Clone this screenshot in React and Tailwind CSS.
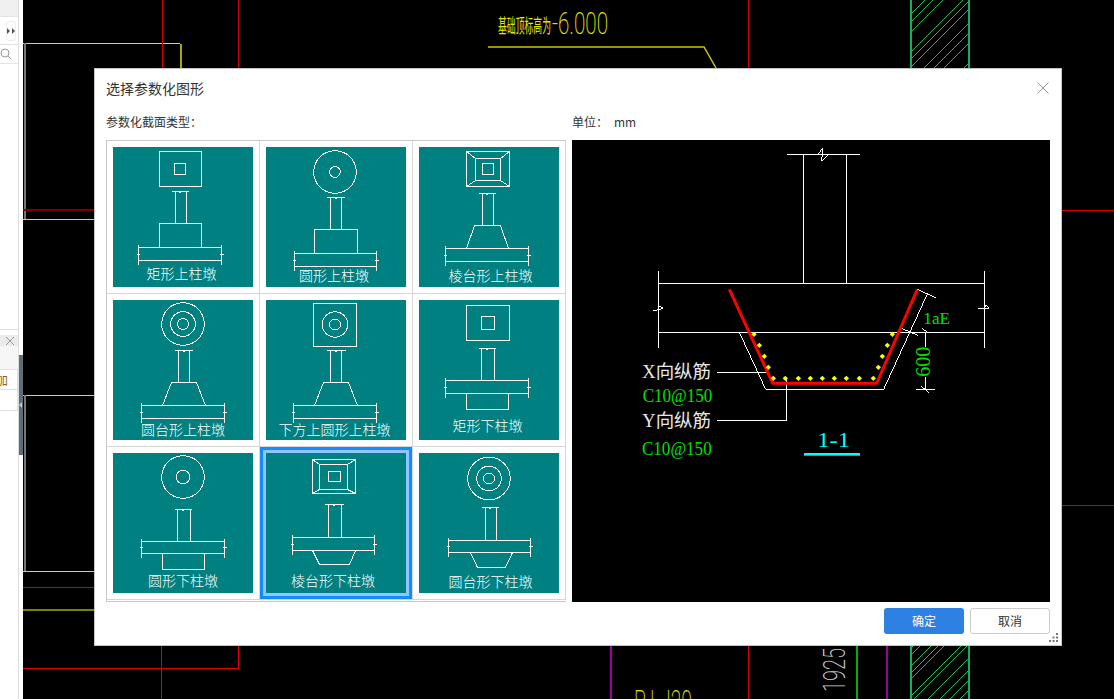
import React from 'react';

const CJK = '"Noto Sans CJK SC", "Liberation Sans", sans-serif';
const SERIF = '"Liberation Serif", "Noto Sans CJK SC", serif';
const THIN = 'Roboto, "Liberation Sans", sans-serif';

// shared pieces of the pier thumbnails, all numbers are px inside the 140x140 tile
const Rect = ({ x1, x2, y1, y2 }) => <rect x={x1} y={y1} width={x2 - x1} height={y2 - y1} />;

const Rings = ({ cx, cy, radii }) => (
  <>
    {radii.map((r) => (
      <circle key={r} cx={cx} cy={cy} r={r} />
    ))}
  </>
);

const Column = ({ x1, x2, capL, capR, top, bottom }) => (
  <>
    <path d={`M${capL} ${top}H${capR}M${x1} ${top}V${bottom}M${x2} ${top}V${bottom}`} />
    <path d={`M${(capL + capR) / 2} ${top - 1}v2`} strokeWidth="2" />
  </>
);

const Slab = ({ x1, x2, y1, y2 }) => (
  <>
    <Rect x1={x1} x2={x2} y1={y1} y2={y2} />
    <path d={`M${x1} ${y1 - 3}V${y2 + 4}M${x2} ${y1 - 3}V${y2 + 4}`} />
    <path d={`M${x1 - 1.5} ${(y1 + y2) / 2}h3M${x2 - 2} ${(y1 + y2) / 2}h4`} />
  </>
);

const Frustum = ({ tl, tr, bl, br, top, bottom }) => (
  <path d={`M${bl} ${bottom}L${tl} ${top}H${tr}L${br} ${bottom}`} />
);

const piers = [
  {
    label: '矩形上柱墩', lx: 68.5, ly: 132,
    art: (
      <>
        <Rect x1={46.5} x2={88.5} y1={4.5} y2={39.5} />
        <Rect x1={61.5} x2={72.5} y1={16.5} y2={27.5} />
        <Column x1={62.5} x2={73.5} capL={58.5} capR={75.5} top={44.5} bottom={76.5} />
        <Rect x1={46.5} x2={88.5} y1={76.5} y2={100.5} />
        <Slab x1={25.5} x2={108.5} y1={100.5} y2={113.5} />
      </>
    ),
  },
  {
    label: '圆形上柱墩', lx: 68, ly: 134,
    art: (
      <>
        <Rings cx={69} cy={25} radii={[21.3, 5.3]} />
        <Column x1={64.5} x2={75.5} capL={60.5} capR={78.5} top={50.5} bottom={82.5} />
        <Rect x1={48.5} x2={91.5} y1={82.5} y2={106.5} />
        <Slab x1={28.5} x2={110.5} y1={106.5} y2={119.5} />
      </>
    ),
  },
  {
    label: '棱台形上柱墩', lx: 71.5, ly: 134,
    art: (
      <>
        <Rect x1={47.5} x2={90.5} y1={4.5} y2={39.5} />
        <Rect x1={56.5} x2={81.5} y1={11.5} y2={33.5} />
        <Rect x1={63.5} x2={74.5} y1={16.5} y2={27.5} />
        <path d="M47.5 4.5L56.5 11.5M90.5 4.5L81.5 11.5M47.5 39.5L56.5 33.5M90.5 39.5L81.5 33.5" />
        <Column x1={63.5} x2={74.5} capL={59.5} capR={76.5} top={46.5} bottom={78.5} />
        <Frustum tl={55.5} tr={81.5} bl={47.5} br={89.5} top={78.5} bottom={101.5} />
        <Slab x1={26.5} x2={109.5} y1={101.5} y2={114.5} />
      </>
    ),
  },
  {
    label: '圆台形上柱墩', lx: 70, ly: 135,
    art: (
      <>
        <Rings cx={70} cy={24} radii={[21.3, 12.3, 5.5]} />
        <Column x1={65.5} x2={76.5} capL={61.5} capR={79.5} top={50.5} bottom={82.5} />
        <Frustum tl={58.5} tr={83.5} bl={49.5} br={92.5} top={82.5} bottom={105.5} />
        <Slab x1={28.5} x2={111.5} y1={105.5} y2={118.5} />
      </>
    ),
  },
  {
    label: '下方上圆形上柱墩', lx: 68.5, ly: 135,
    art: (
      <>
        <Rect x1={47.5} x2={90.5} y1={3.5} y2={46.5} />
        <Rings cx={69} cy={24.5} radii={[12.7, 5.5]} />
        <Column x1={64.5} x2={75.5} capL={60.5} capR={79.5} top={50.5} bottom={82.5} />
        <Frustum tl={57.5} tr={82.5} bl={48.5} br={91.5} top={82.5} bottom={105.5} />
        <Slab x1={27.5} x2={110.5} y1={105.5} y2={118.5} />
      </>
    ),
  },
  {
    label: '矩形下柱墩', lx: 68.5, ly: 131,
    art: (
      <>
        <Rect x1={47.5} x2={90.5} y1={5.5} y2={40.5} />
        <Rect x1={62.5} x2={75.5} y1={16.5} y2={29.5} />
        <Column x1={62.5} x2={75.5} capL={59.5} capR={76.5} top={48.5} bottom={80.5} />
        <Slab x1={26.5} x2={109.5} y1={80.5} y2={93.5} />
        <Rect x1={47.5} x2={89.5} y1={93.5} y2={109.5} />
      </>
    ),
  },
  {
    label: '圆形下柱墩', lx: 70, ly: 133,
    art: (
      <>
        <Rings cx={70} cy={24} radii={[21.3, 6.8]} />
        <Column x1={64.5} x2={77.5} capL={61.5} capR={78.5} top={56.5} bottom={88.5} />
        <Slab x1={28.5} x2={111.5} y1={88.5} y2={100.5} />
        <Rect x1={49.5} x2={91.5} y1={100.5} y2={116.5} />
      </>
    ),
  },
  {
    label: '棱台形下柱墩', lx: 67, ly: 133,
    selected: true,
    art: (
      <>
        <Rect x1={46.5} x2={89.5} y1={6.5} y2={40.5} />
        <Rect x1={53.5} x2={81.5} y1={11.5} y2={36.5} />
        <Rect x1={62.5} x2={74.5} y1={18.5} y2={28.5} />
        <path d="M46.5 6.5L53.5 11.5M89.5 6.5L81.5 11.5M46.5 40.5L53.5 36.5M89.5 40.5L81.5 36.5" />
        <Column x1={62.5} x2={75.5} capL={58.5} capR={77.5} top={51.5} bottom={84.5} />
        <Slab x1={26.5} x2={108.5} y1={84.5} y2={97.5} />
        <path d="M46.5 97.5L53.5 111.5H83.5L89.5 97.5" />
      </>
    ),
  },
  {
    label: '圆台形下柱墩', lx: 71.5, ly: 134,
    art: (
      <>
        <Rings cx={70} cy={25.5} radii={[21.3, 12.3, 5.5]} />
        <Column x1={66.5} x2={77.5} capL={62.5} capR={79.5} top={54.5} bottom={87.5} />
        <Slab x1={29.5} x2={111.5} y1={87.5} y2={99.5} />
        <path d="M51.5 99.5L58.5 114.5H86.5L93.5 99.5" />
      </>
    ),
  },
];

const PierTile = ({ pier }) => (
  <svg width="140" height="140" viewBox="0 0 140 140" className="block bg-[#008080]">
    <g fill="none" stroke="#fff" strokeWidth="1" shapeRendering="crispEdges">
      {pier.art}
    </g>
    <text x={pier.lx} y={pier.ly} fill="#fff" fontSize="14" fontWeight="300" textAnchor="middle" fontFamily={CJK}>
      {pier.label}
    </text>
  </svg>
);

// section 1-1 preview, coords measured on a 3x crop so the group scales them back down
const SectionPreview = () => {
  const dots = [
    [372, 568], [388, 601], [403, 634], [415, 667], [430, 700], [466, 700], [505, 700], [541, 700], [577, 700],
    [613, 700], [649, 700], [688, 700], [730, 700], [745, 667], [757, 634], [772, 601], [787, 568],
  ];
  return (
    <svg viewBox="572 140 478 462" className="block w-full h-full">
      <g transform="translate(630 145) scale(0.33333)">
        <g fill="none" stroke="#fff" strokeWidth="3" shapeRendering="crispEdges">
          <path d="M471 28H690M520 28V415M649 28V415" />
          <path d="M563 28L578 10L575 48L597 28" />
          <path d="M85 378V610M1063 378V610M85 415H1063M85 562H1063" />
          <path d="M68 498L100 490L85 482L85 508M1045 490L1078 490L1066 480L1062 505" />
          <path d="M328 562L407 733H761L893 445" />
          <path d="M262 682H415M262 828H469V700" />
          <path d="M862 433L917 458M815 550L865 572M875 550L897 565" />
          <path d="M886 560V605M886 695V733M858 733H915M872 722L898 744" />
        </g>
        <path d="M298 433L428 715H740L862 433" fill="none" stroke="#f00" strokeWidth="9" strokeLinejoin="miter" />
        {dots.map(([x, y]) => (
          <path key={`${x}-${y}`} d={`M${x} ${y - 8}L${x + 8} ${y}L${x} ${y + 8}L${x - 8} ${y}Z`} fill="#ff0" />
        ))}
        <rect x="522" y="924" width="168" height="8" fill="#0ff" />
        <g fontSize="54" fontFamily={SERIF} fill="#e8e8e8">
          <text x="37" y="699" textLength="206" lengthAdjust="spacingAndGlyphs">X向纵筋</text>
          <text x="37" y="845" textLength="206" lengthAdjust="spacingAndGlyphs">Y向纵筋</text>
        </g>
        <g fontSize="58" fontFamily={SERIF} fill="#00e000">
          <text x="38" y="770" textLength="209" lengthAdjust="spacingAndGlyphs">C10@150</text>
          <text x="36" y="929" textLength="209" lengthAdjust="spacingAndGlyphs">C10@150</text>
          <text x="880" y="538" fontSize="48" textLength="80" lengthAdjust="spacingAndGlyphs">1aE</text>
          <text transform="translate(900 695) rotate(-90)" fontSize="60" textLength="90" lengthAdjust="spacingAndGlyphs">600</text>
        </g>
        <text x="562" y="906" fontSize="66" fontFamily={SERIF} fill="#0ff" textLength="98" lengthAdjust="spacingAndGlyphs">1-1</text>
      </g>
    </svg>
  );
};

// the CAD model behind the dialog
const CadBackdrop = () => {
  const hatchTop = [15, 23, 33, 53, 60, 68, 82, 92, 102, 122];
  const hatchBottom = [649, 656, 667, 674, 680, 697, 703, 717, 729, 739, 749];
  return (
    <svg viewBox="23 0 1091 699" className="block w-full h-full">
      <defs>
        <clipPath id="hatchClip">
          <rect x="910" y="0" width="59" height="699" />
        </clipPath>
      </defs>
      <g fill="none" strokeWidth="1" shapeRendering="crispEdges">
        <path d="M23 43.5H180M23 219.5H94M23 395.5H94M23 571.5H94" stroke="#c8c8c8" />
        <path d="M25 43V219M25 395V571" stroke="#777" strokeWidth="2" />
        <path d="M23 210H94" stroke="#800000" strokeWidth="2" />
        <path d="M23 587.5H94M162.5 0V68M238.5 0V68M748.5 0V68M748.5 646V699M1062 210.5H1114M1062 505.5H1114" stroke="#d00000" />
        <path d="M23 668.5H238.5V646M161.5 646V699" stroke="#e00000" />
        <path d="M180.5 44V68" stroke="#a8a800" strokeWidth="2" />
        <path d="M23 610H94" stroke="#808000" strokeWidth="2" />
        <path d="M610.5 646V699M886.5 646V699" stroke="#a000a0" strokeWidth="2" />
        <path d="M856.5 646V699" stroke="#00b000" strokeWidth="2" />
        <path d="M910.5 0V68M968.5 0V68M910.5 646V699M968.5 646V699" stroke="#10b060" strokeWidth="2" />
      </g>
      <path d="M488 47H704L716 68" fill="none" stroke="#c8c800" strokeWidth="1.5" />
      <g stroke="#10c060" strokeWidth="1" clipPath="url(#hatchClip)">
        {[...hatchTop, ...hatchBottom].map((y) => (
          <line key={y} x1="910" y1={y} x2="969" y2={y - 59} />
        ))}
      </g>
      <text x="498" y="33" fontSize="19" fill="#e6e600" fontFamily={CJK} textLength="53" lengthAdjust="spacingAndGlyphs">基础顶标高为</text>
      <text x="552" y="34" fontSize="31" fontWeight="200" fill="#e6e600" fontFamily={THIN} textLength="56" lengthAdjust="spacingAndGlyphs">-6.000</text>
      <text transform="translate(845 692) rotate(-90)" fontSize="31" fontWeight="200" fill="#d0d0d0" fontFamily={THIN} textLength="44" lengthAdjust="spacingAndGlyphs">1925</text>
      <text x="634" y="712" fontSize="31" fontWeight="200" fill="#e6e600" fontFamily={THIN} textLength="58" lengthAdjust="spacingAndGlyphs">PJ-J20</text>
    </svg>
  );
};

const SidePanel = () => (
  <div className="w-[23px] h-[699px] shrink-0 bg-white relative overflow-hidden">
    <div className="w-[19px] h-full border-r border-[#dcdcdc] flex flex-col">
      <div className="h-[17px] bg-[#f0f0f0] border-b border-[#e4e4e4]" />
      <div className="h-[28px] border-b border-[#e0e0e0] flex items-center justify-end pr-[2px]">
        <div className="w-[10px] h-[20px] border border-[#eee] rounded-[3px] flex items-center justify-center">
          <svg width="8" height="6" viewBox="0 0 8 6">
            <path d="M0 0L3 3L0 6ZM5 0L8 3L5 6Z" fill="#555" />
          </svg>
        </div>
      </div>
      <div className="h-[19px] border-b border-[#e4e4e4] flex items-center">
        <svg width="12" height="12" viewBox="0 0 12 12" fill="none" stroke="#999" strokeWidth="1">
          <circle cx="5" cy="5" r="4" />
          <path d="M8 8L11 11" />
        </svg>
      </div>
      <div className="h-[266px] border-b border-[#dcdcdc]" />
      <div className="h-[5px]" />
      <div className="h-[11px] bg-[#ebebeb] flex items-center justify-end pr-[4px]">
        <svg width="8" height="8" viewBox="0 0 8 8" stroke="#999" strokeWidth="1">
          <path d="M0 0L8 8M8 0L0 8" />
        </svg>
      </div>
      <div className="h-[23px] bg-[#f6f6f6]" />
      <div className="h-[21px] border-y border-[#e0e0e0] border-r overflow-hidden flex items-center">
        <span className="text-[12px] leading-none text-[#a05a10] -ml-[4px]" style={{ fontFamily: CJK }}>加</span>
      </div>
      <div className="h-[21px] border-b border-r border-[#e0e0e0]" />
    </div>
    <div className="absolute left-[19px] top-[355px] w-[4px] h-[100px] bg-[#5f6b75] flex items-center">
      <svg width="4" height="6" viewBox="0 0 4 6">
        <path d="M3 0L0 3L3 6Z" fill="#c0c6cc" />
      </svg>
    </div>
  </div>
);

export default function App() {
  return (
    <div className="relative flex w-[1114px] h-[699px] overflow-hidden bg-black" style={{ fontFamily: CJK }}>
      <SidePanel />
      <div className="flex-1 min-w-0">
        <CadBackdrop />
      </div>

      {/* dialog */}
      <div className="absolute left-[94px] top-[68px] w-[968px] h-[578px] bg-white border border-[#c4c4c4] flex flex-col">
        <div className="h-[38px] shrink-0 pl-[11px] pr-[12px] flex items-center justify-between">
          <span className="text-[14px] text-[#333]">选择参数化图形</span>
          <svg width="12" height="12" viewBox="0 0 12 12" stroke="#999" strokeWidth="1">
            <path d="M0.5 0.5L11.5 11.5M11.5 0.5L0.5 11.5" />
          </svg>
        </div>
        <div className="h-[29px] mb-[4px] shrink-0 pl-[11px] flex items-center text-[12px] text-[#333]">
          <span className="w-[466px]">参数化截面类型：</span>
          <span className="w-[42px]">单位：</span>
          <span>mm</span>
        </div>
        <div className="pl-[11px] flex gap-[6px]">
          <div className="w-[460px] h-[462px] border border-r-0 border-[#c8c8c8] grid grid-cols-[repeat(3,153px)] grid-rows-[repeat(3,153px)]">
            {piers.map((pier) => (
              <div key={pier.label} className="border-r border-b border-[#d6d6d6]">
                {pier.selected ? (
                  <div className="h-full border-[3px] border-[#0f8fff]">
                    <div className="h-full border-[3px] border-[#92c5fb]">
                      <PierTile pier={pier} />
                    </div>
                  </div>
                ) : (
                  <div className="h-full p-[6px]">
                    <PierTile pier={pier} />
                  </div>
                )}
              </div>
            ))}
          </div>
          <div className="w-[478px] h-[462px] bg-black">
            <SectionPreview />
          </div>
        </div>
        <div className="mt-[6px] pr-[11px] flex justify-end gap-[6px] text-[12px]">
          <button className="w-[80px] h-[26px] rounded-[3px] bg-[#2f80e3] text-white">确定</button>
          <button className="w-[80px] h-[26px] rounded-[3px] bg-white border border-[#ccc] text-[#333]">取消</button>
        </div>
        <svg width="10" height="10" viewBox="0 0 10 10" className="absolute right-[2px] bottom-[2px]" fill="#777">
          <path d="M7 0h2v2h-2zM3.5 3.5h2v2h-2zM7 3.5h2v2h-2zM0 7h2v2h-2zM3.5 7h2v2h-2zM7 7h2v2h-2z" />
        </svg>
      </div>
    </div>
  );
}
